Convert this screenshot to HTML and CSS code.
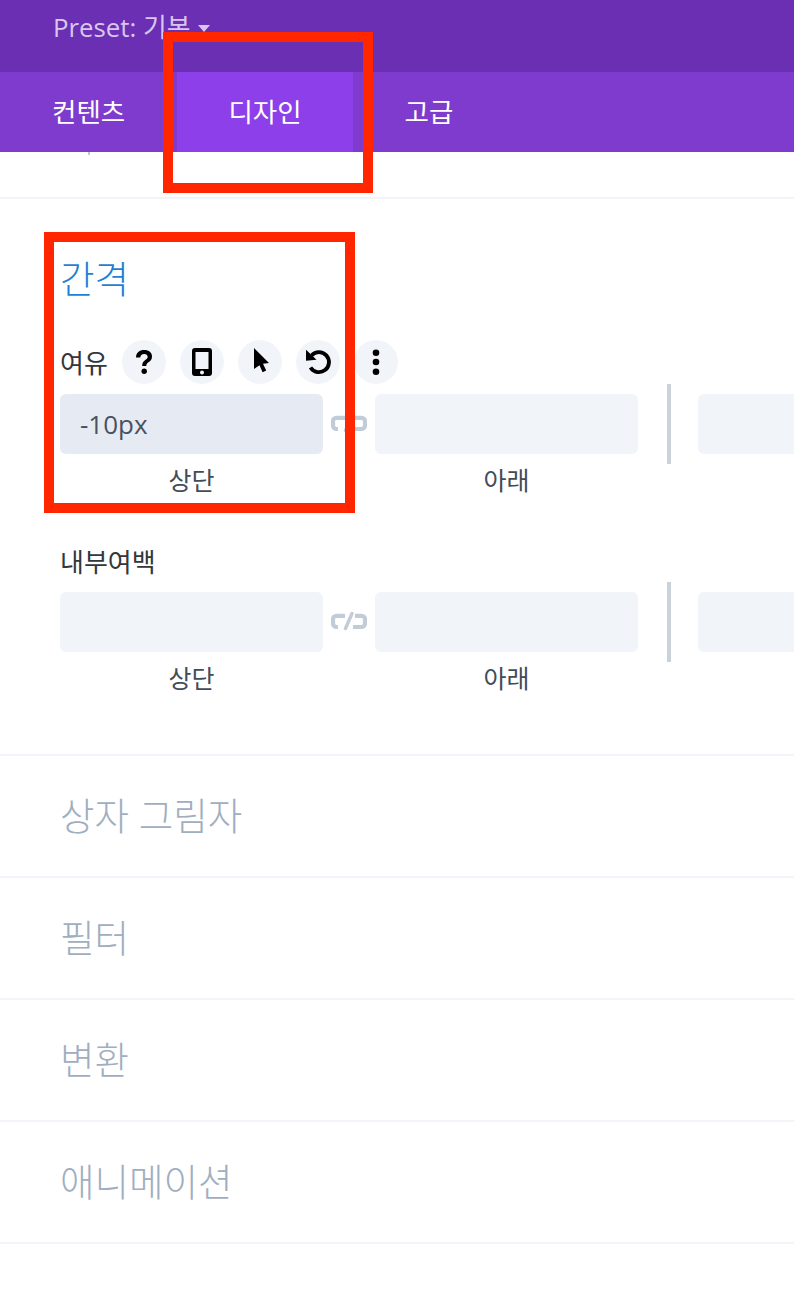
FILE: index.html
```html
<!DOCTYPE html>
<html lang="ko">
<head>
    <meta charset="UTF-8">
    <meta name="viewport" content="width=device-width, initial-scale=1.0">
    <title>디자인 설정</title>
    <link rel="stylesheet" href="styles.css">
</head>
<body>

    <div class="preset-bar">
        <span class="preset-label">Preset: 기본</span>
        <span class="preset-arrow"></span>
    </div>

    <div class="tabs">
        <div class="tab tab-content">컨텐츠</div>
        <div class="tab tab-design">디자인</div>
        <div class="tab tab-advanced">고급</div>
    </div>

    <div class="group group-stub"><span class="stub-mark"></span></div>

    <!-- 간격 -->
    <div class="group group-open">
        <h3 class="group-title group-title-active">간격</h3>

        <div class="field-head">
            <span class="field-label">여유</span>
            <span class="tool">
                <svg width="44" height="44" viewBox="0 0 44 44"><path d="M14 17.500c0-5 3.500-7.500 8.200-7.500 4.700 0 7.800 2.600 7.800 6.500 0 3-1.500 4.400-3.500 5.800-1.700 1.200-2.200 1.900-2.200 3.700h-4.100c0-3.100.9-4.500 3-6 1.700-1.200 2.500-2 2.500-3.300 0-1.700-1.400-2.800-3.500-2.800-2.300 0-3.800 1.300-3.900 3.600z" fill="#000"/><circle cx="22.200" cy="31.300" r="2.700" fill="#000"/></svg>
            </span>
            <span class="tool">
                <svg width="44" height="44" viewBox="0 0 44 44"><path fill-rule="evenodd" d="M15 8h14a3 3 0 0 1 3 3v22a3 3 0 0 1-3 3H15a3 3 0 0 1-3-3V11a3 3 0 0 1 3-3zm.5 4v17h13V12zM22 30.500a2 2 0 1 0 0 4 2 2 0 0 0 0-4z" fill="#000"/></svg>
            </span>
            <span class="tool">
                <svg width="44" height="44" viewBox="0 0 44 44"><path d="M16 8l15 15-6 .8 3.200 6.700-3.600 1.700-3.100-7L16 29z" fill="#000"/></svg>
            </span>
            <span class="tool">
                <svg width="44" height="44" viewBox="0 0 44 44"><path d="M15.500 15.500A10 10 0 1 1 14.500 27.500" fill="none" stroke="#000" stroke-width="3.800"/><path d="M10 9.700V20.700L20.500 19.700z" fill="#000"/></svg>
            </span>
            <span class="tool">
                <svg width="44" height="44" viewBox="0 0 44 44"><circle cx="22" cy="12.700" r="3.300" fill="#000"/><circle cx="22" cy="22" r="3.300" fill="#000"/><circle cx="22" cy="31.700" r="3.300" fill="#000"/></svg>
            </span>
        </div>

        <div class="spacing-row">
            <div class="spacing-cell">
                <div class="spacing-input spacing-input-filled">-10px</div>
                <div class="spacing-caption">상단</div>
            </div>
            <svg class="link-icon" width="36" height="22" viewBox="0 0 36 22"><path d="M14 3.800H5.500A3.500 3.500 0 0 0 2 7.300v4.200a3.500 3.500 0 0 0 3.500 3.500H7M24 3.800h6.500A3.500 3.500 0 0 1 34 7.300v4.200a3.500 3.500 0 0 1-3.500 3.500H22" fill="none" stroke="#c2ccd8" stroke-width="4.200"/><path d="M21 1.500L14.500 16.500" fill="none" stroke="#c2ccd8" stroke-width="3.400" stroke-linecap="round"/></svg>
            <div class="spacing-cell">
                <div class="spacing-input"></div>
                <div class="spacing-caption">아래</div>
            </div>
            <span class="spacing-divider"></span>
            <div class="spacing-cell">
                <div class="spacing-input"></div>
            </div>
        </div>

        <div class="field-head field-head-plain">
            <span class="field-label">내부여백</span>
        </div>

        <div class="spacing-row">
            <div class="spacing-cell">
                <div class="spacing-input"></div>
                <div class="spacing-caption">상단</div>
            </div>
            <svg class="link-icon" width="36" height="22" viewBox="0 0 36 22"><path d="M14 3.800H5.500A3.500 3.500 0 0 0 2 7.300v4.200a3.500 3.500 0 0 0 3.500 3.500H7M24 3.800h6.500A3.500 3.500 0 0 1 34 7.300v4.200a3.500 3.500 0 0 1-3.500 3.500H22" fill="none" stroke="#c2ccd8" stroke-width="4.200"/><path d="M21 1.500L14.500 16.500" fill="none" stroke="#c2ccd8" stroke-width="3.400" stroke-linecap="round"/></svg>
            <div class="spacing-cell">
                <div class="spacing-input"></div>
                <div class="spacing-caption">아래</div>
            </div>
            <span class="spacing-divider"></span>
            <div class="spacing-cell">
                <div class="spacing-input"></div>
            </div>
        </div>
    </div>

    <div class="group"><h3 class="group-title">상자 그림자</h3></div>
    <div class="group"><h3 class="group-title">필터</h3></div>
    <div class="group"><h3 class="group-title">변환</h3></div>
    <div class="group"><h3 class="group-title">애니메이션</h3></div>

    <!-- 빨간 표시 -->
    <div class="marker marker-tab"></div>
    <div class="marker marker-spacing"></div>

</body>
</html>
```

FILE: styles.css
```css
body {
    font-family: "Open Sans", "Noto Sans CJK KR", sans-serif;
    margin: 0;
    background-color: #FFFFFF;
    overflow: hidden;
    position: relative;
    height: 1292px;
}

.preset-bar {
    height: 72px;
    background-color: #6A2FB3;
    padding-left: 53px;
    box-sizing: border-box;
    display: flex;
    align-items: flex-start;
    padding-top: 9px;
    gap: 8px;
}

.preset-label {
    font-size: 25.800px;
    line-height: 36px;
    color: #D9C6F0;
}

.preset-arrow {
    width: 0;
    height: 0;
    margin-top: 16px;
    border-left: 6px solid transparent;
    border-right: 6px solid transparent;
    border-top: 7px solid #D9C6F0;
}

.tabs {
    height: 80px;
    background-color: #7E3BCE;
    display: flex;
}

.tab {
    color: #FFFFFF;
    font-size: 26.500px;
    font-weight: 400;
    line-height: 80px;
    text-align: center;
}

.tab-content {
    width: 177px;
    text-align: left;
    padding-left: 52px;
    box-sizing: border-box;
}

.tab-design {
    width: 176px;
    background-color: #8D40EA;
}

.tab-advanced {
    width: 152px;
}

.group {
    height: 122px;
    border-bottom: 2px solid #F1F4F8;
    box-sizing: border-box;
    padding: 0 60px;
    overflow: hidden;
}

.group-stub {
    height: 47px;
}

.stub-mark {
    display: block;
    width: 2px;
    height: 3px;
    margin-left: 28px;
    background-color: #BEC8D6;
}

.group-open {
    height: 557px;
    padding-right: 0;
}

.group-title {
    margin: 0;
    font-size: 37.500px;
    font-weight: 300;
    line-height: 120px;
    color: #A0AEC0;
}

.group-title-active {
    color: #1F7FD6;
    line-height: 46px;
    padding-top: 57px;
}

.field-head {
    display: flex;
    align-items: center;
    gap: 14px;
    height: 44px;
    margin-top: 38px;
}

.field-head-plain {
    margin-top: 22px;
    height: 38px;
}

.field-label {
    font-size: 26px;
    color: #32373C;
    width: 48px;
    white-space: nowrap;
}

.tool {
    width: 44px;
    height: 44px;
    border-radius: 50%;
    background-color: #F1F5F9;
    display: block;
}

.tool svg {
    display: block;
}

.spacing-row {
    display: flex;
    align-items: flex-start;
    margin-top: 10px;
    height: 126px;
    width: 900px;
}

.field-head-plain + .spacing-row {
    margin-top: 12px;
}

.spacing-cell {
    width: 263px;
    flex-shrink: 0;
}

.spacing-input {
    height: 60px;
    border-radius: 6px;
    background-color: #F1F5F9;
    color: #47525F;
    font-size: 26px;
    line-height: 60px;
    padding-left: 20px;
    box-sizing: border-box;
}

.spacing-input-filled {
    background-color: #E6EBF3;
}

.spacing-caption {
    margin-top: 8px;
    text-align: center;
    font-size: 25px;
    line-height: 36px;
    color: #414C59;
}

.link-icon {
    flex-shrink: 0;
    width: 36px;
    margin: 20px 8px 0;
}

.spacing-divider {
    flex-shrink: 0;
    width: 4px;
    height: 80px;
    margin: -10px 27px 0 29px;
    background-color: #CBD2D9;
}

.marker {
    position: absolute;
    box-sizing: border-box;
    border: 10px solid #FF2600;
}

.marker-tab {
    left: 163px;
    top: 32px;
    width: 210px;
    height: 161px;
}

.marker-spacing {
    left: 44px;
    top: 232px;
    width: 311px;
    height: 281px;
}
```
